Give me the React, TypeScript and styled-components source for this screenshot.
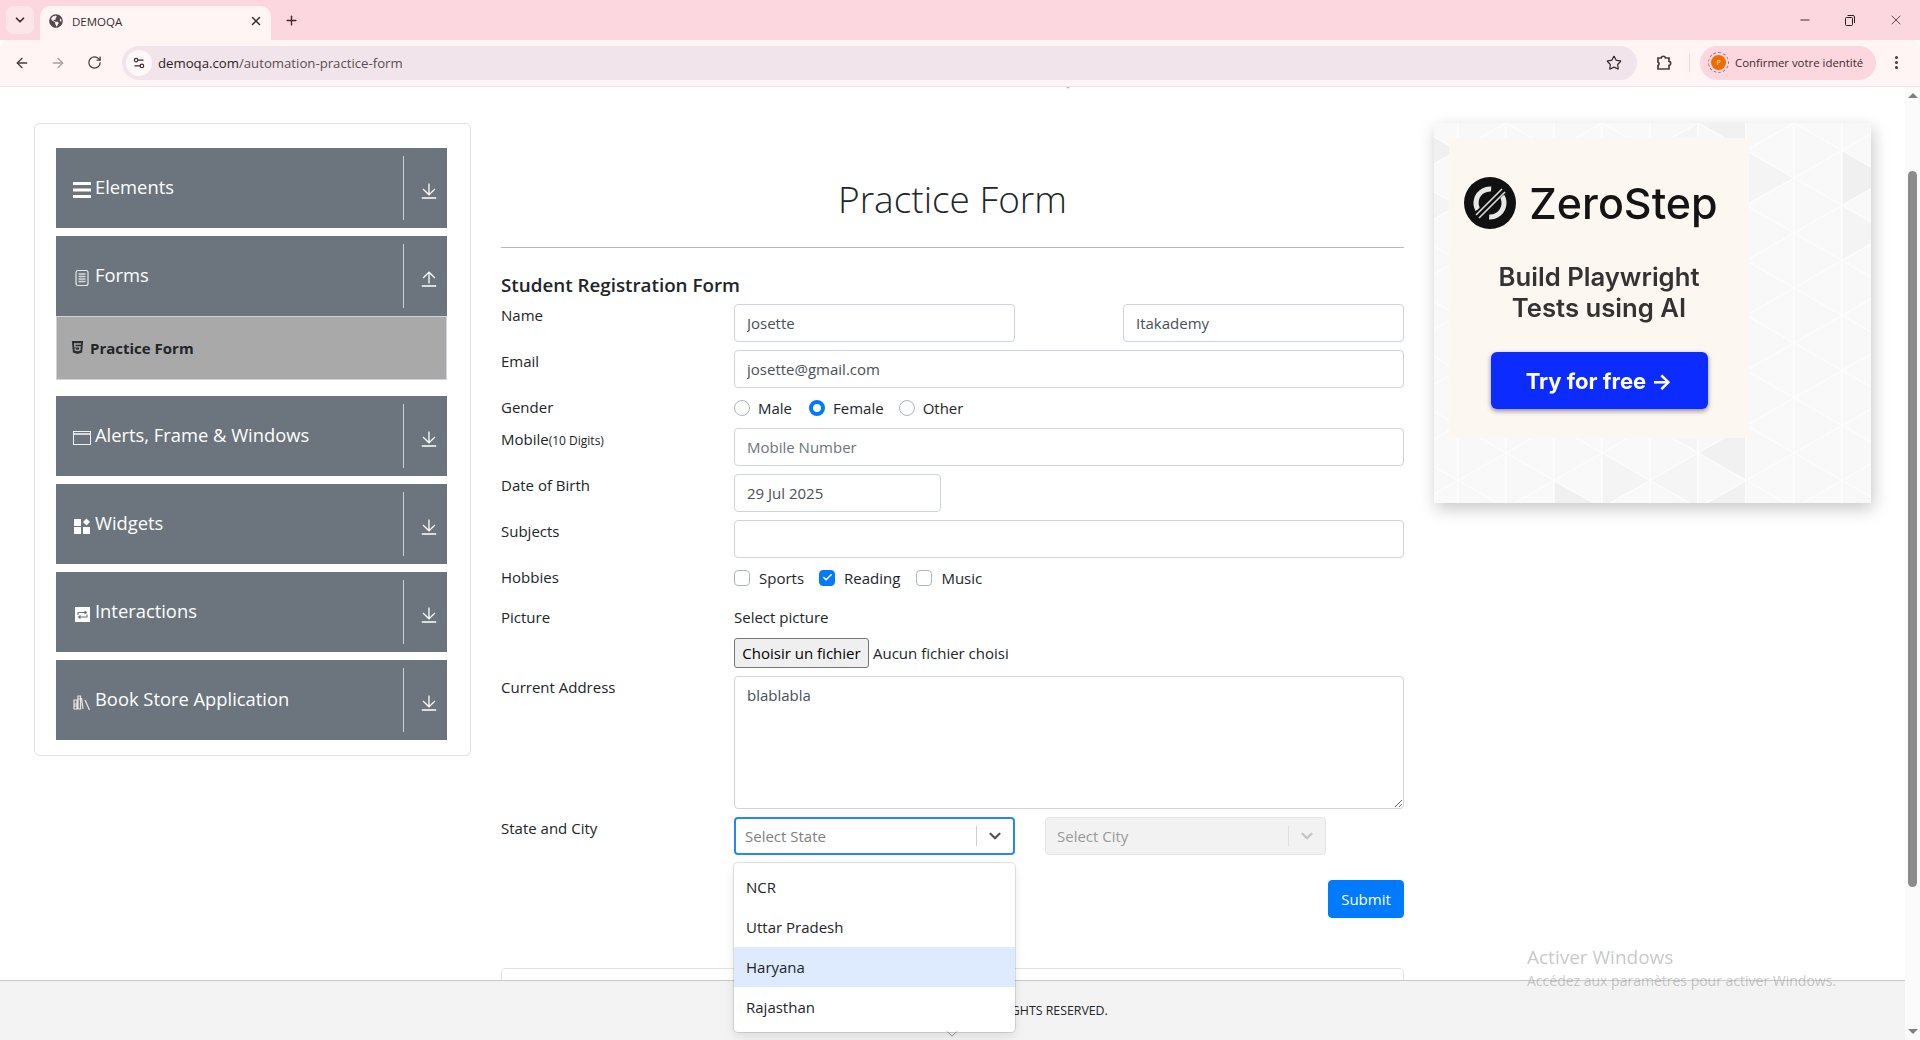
import React, { FunctionComponent } from "react";
import styled, { createGlobalStyle } from "styled-components";
import {
  ArrowLeft,
  ArrowRight,
  Check,
  ChevronDown,
  EllipsisVertical,
  Minus,
  Plus,
  RotateCw,
  Settings2,
  Star,
  X,
} from "lucide-react";
import { FaGlobeAmericas, FaHtml5 } from "react-icons/fa";

const GlobalStyle = createGlobalStyle`
  html, body {
    margin: 0;
    padding: 0;
    width: 1920px;
    height: 1040px;
    overflow: hidden;
    background: #fff;
    font-family: "Open Sans", "Liberation Sans", sans-serif;
    color: #212529;
  }
  * { box-sizing: border-box; }
`;

const Shell = styled.div`
  width: 1920px;
  height: 1040px;
  display: flex;
  flex-direction: column;
`;

/* browser chrome */
const TabStrip = styled.div`
  height: 40px;
  background: #fdd7df;
  display: flex;
  align-items: flex-end;
  padding-left: 6px;
  color: #3b2a2e;
`;
const TabSearch = styled.div`
  width: 28px;
  height: 28px;
  margin-bottom: 6px;
  border-radius: 8px;
  background: #fde6ea;
  display: flex;
  align-items: center;
  justify-content: center;
`;
const Tab = styled.div`
  width: 231px;
  height: 34px;
  margin-left: 6px;
  padding: 0 8px 4px 9px;
  background: #fff5f5;
  border-radius: 10px 10px 0 0;
  display: flex;
  align-items: center;
  font-size: 11.5px;
`;
const TabTitle = styled.span`
  margin-left: 9px;
  flex: 1;
`;
const NewTab = styled.div`
  margin: 0 0 12px 13px;
  display: flex;
`;
const WindowButtons = styled.div`
  margin-left: auto;
  margin-bottom: 12px;
  width: 138px;
  display: flex;
  justify-content: space-around;
  align-items: center;
  padding-right: 0;
`;
const Toolbar = styled.div`
  height: 47px;
  background: #fff5f5;
  border-bottom: 1px solid #f6dfe2;
  border-radius: 8px 8px 0 0;
  padding: 6px 8px 7px 0;
  display: flex;
  align-items: center;
  color: #4b3a3e;
`;
const NavButton = styled.div<{ $faded?: boolean }>`
  width: 36px;
  display: flex;
  justify-content: center;
  color: ${(p) => (p.$faded ? "#ad9fa2" : "#4b3a3e")};
`;
const NavGroup = styled.div`
  margin-left: 4px;
  display: flex;
`;
const Omnibox = styled.div`
  width: 1515px;
  height: 34px;
  margin-left: 10px;
  background: #f1e5eb;
  border-radius: 17px;
  padding: 0 15px 0 3px;
  display: flex;
  align-items: center;
  font-size: 13.2px;
  color: #5c4d52;
`;
const SiteIcon = styled.div`
  width: 26px;
  height: 26px;
  margin: 0 6px 0 1px;
  border-radius: 50%;
  background: #fff8f8;
  display: flex;
  align-items: center;
  justify-content: center;
  color: #3b2a2e;
`;
const Host = styled.span`
  color: #2b1d21;
`;
const OmniSpacer = styled.div`
  flex: 1;
`;
const ExtensionButton = styled.div`
  margin-left: 18px;
  display: flex;
`;
const ToolbarDivider = styled.div`
  width: 1px;
  height: 18px;
  margin: 0 10px 0 17px;
  background: #f8d5dc;
`;
const ProfilePill = styled.div`
  width: 176px;
  height: 34px;
  border-radius: 17px;
  background: #fdd7df;
  padding-left: 9px;
  display: flex;
  align-items: center;
  font-size: 11.4px;
  color: #3b2a2e;
`;
const Avatar = styled.div`
  width: 15px;
  height: 15px;
  margin: 0 9px 0 2px;
  border-radius: 50%;
  background: #ef6c00;
  outline: 1px dashed #9c6f78;
  outline-offset: 2px;
  color: #ffe5c8;
  font-size: 7px;
  display: flex;
  align-items: center;
  justify-content: center;
`;
const MenuButton = styled.div`
  margin-left: 12px;
  display: flex;
`;

/* page */
const Viewport = styled.div`
  flex: 1;
  min-height: 0;
  display: flex;
  position: relative;
`;
const Content = styled.div`
  flex: 1;
  position: relative;
  overflow: hidden;
  padding: 36px 34px 0;
  display: grid;
  grid-template-columns: 437px 903px 437px;
  column-gap: 30px;
  align-items: start;
`;

/* sidebar */
const SideCard = styled.div`
  border: 1px solid #dfdfdf;
  border-radius: 6px;
  padding: 24px 23px 7px 21px;
`;
const Group = styled.div`
  margin-bottom: 8px;
`;
const GroupHeader = styled.div`
  height: 80px;
  background: #6c757d;
  color: #fff;
  padding: 8px 0 8px 17px;
  display: flex;
  align-items: center;
  font-size: 18.35px;
`;
const GroupIcon = styled.div`
  width: 18px;
  height: 18px;
  margin: 4px 4px 0 0;
  display: flex;
`;
const GroupTitle = styled.div`
  flex: 1;
  margin-top: -4px;
`;
const GroupToggle = styled.div`
  width: 44px;
  height: 64px;
  border-left: 1px solid #ced2d6;
  padding: 27px 0 0 17px;
  display: flex;
  align-items: flex-start;
`;
const PracticeItem = styled.div`
  height: 64px;
  margin: 0 0 16px;
  padding-left: 13px;
  background: #a9a9a9;
  border: 1px solid #ced4da;
  display: flex;
  align-items: center;
  font-size: 15px;
  font-weight: 700;
  color: #212529;
`;
const PracticeIcon = styled.div`
  width: 15px;
  margin: -2px 5px 0 0;
  display: flex;
`;

/* form */
const FormColumn = styled.div`
  display: flex;
  flex-direction: column;
`;
const Title = styled.h1`
  margin: 52px 0 0;
  line-height: 48px;
  text-align: center;
  font-size: 37px;
  font-weight: 300;
  color: #212529;
`;
const Rule = styled.hr`
  width: 100%;
  margin: 24px 0 0;
  border: 0;
  border-top: 1px solid #b9b9b9;
`;
const Subtitle = styled.h5`
  margin: 25px 0 7px;
  line-height: 24px;
  font-size: 18.8px;
  font-weight: 600;
  color: #212529;
`;
const Row = styled.div<{ $gap?: number }>`
  display: grid;
  grid-template-columns: 233px 1fr;
  margin-bottom: ${(p) => p.$gap ?? 8}px;
  font-size: 15px;
  color: #212529;
`;
const Label = styled.div`
  height: 24px;
  line-height: 22px;
`;
const Small = styled.small`
  font-size: 12px;
`;
const Field = styled.input<{ $width?: number }>`
  display: block;
  width: ${(p) => (p.$width ? `${p.$width}px` : "100%")};
  height: 38px;
  padding: 6px 12px;
  border: 1px solid #ced4da;
  border-radius: 4px;
  background: #fff;
  font: inherit;
  color: #495057;
  outline: none;
  &::placeholder {
    color: #6c757d;
    opacity: 1;
  }
`;
const NameFields = styled.div`
  display: flex;
  justify-content: space-between;
`;
const Choices = styled.div`
  display: flex;
  align-items: center;
  height: 24px;
  padding-bottom: 1px;
`;
const Choice = styled.div<{ $gap: number }>`
  display: flex;
  align-items: center;
  margin-right: ${(p) => p.$gap}px;
`;
const Radio = styled.span<{ $on?: boolean }>`
  width: 16px;
  height: 16px;
  margin-right: 8px;
  border-radius: 50%;
  background: #fff;
  border: ${(p) => (p.$on ? "4.5px solid #007bff" : "1px solid #adb5bd")};
`;
const CheckBox = styled.span<{ $on?: boolean }>`
  width: 16px;
  height: 16px;
  margin-right: 9px;
  border-radius: 4px;
  background: ${(p) => (p.$on ? "#007bff" : "#fff")};
  border: 1px solid ${(p) => (p.$on ? "#007bff" : "#adb5bd")};
  color: #fff;
  display: flex;
  align-items: center;
  justify-content: center;
`;
const PickerLabel = styled.div`
  height: 24px;
  line-height: 22px;
  margin-bottom: 8px;
`;
const FileLine = styled.div`
  display: flex;
  align-items: center;
  height: 30px;
`;
const FileButton = styled.button`
  width: 135px;
  height: 30px;
  padding: 0;
  margin-right: 4px;
  background: #efefef;
  border: 1px solid #767676;
  border-radius: 3px;
  font: inherit;
  color: #000;
`;
const AddressBox = styled.textarea`
  display: block;
  width: 100%;
  height: 133px;
  padding: 6px 12px;
  border: 1px solid #ced4da;
  border-radius: 4px;
  font: inherit;
  line-height: 24px;
  color: #495057;
  outline: none;
`;
const SelectRow = styled.div`
  display: flex;
  gap: 30px;
`;
const Select = styled.div<{ $focused?: boolean; $disabled?: boolean }>`
  width: 281px;
  height: 38px;
  padding-left: ${(p) => (p.$focused ? "9px" : "11px")};
  border-radius: 4px;
  border: ${(p) =>
    p.$focused
      ? "2px solid #2684ff"
      : p.$disabled
      ? "1px solid #e6e6e6"
      : "1px solid #ccc"};
  background: ${(p) => (p.$disabled ? "#f2f2f2" : "#fff")};
  color: ${(p) => (p.$disabled ? "#999" : "#808080")};
  display: flex;
  align-items: center;
`;
const SelectText = styled.div`
  flex: 1;
`;
const SelectDivider = styled.span<{ $disabled?: boolean }>`
  width: 1px;
  height: 20px;
  background: ${(p) => (p.$disabled ? "#e0e0e0" : "#ccc")};
`;
const SelectChevron = styled.div<{ $disabled?: boolean }>`
  width: 36px;
  display: flex;
  justify-content: center;
  color: ${(p) => (p.$disabled ? "#c4c4c4" : "#555")};
`;
const Menu = styled.div`
  position: absolute;
  left: 734px;
  top: 776px;
  z-index: 5;
  width: 281px;
  height: 169px;
  padding: 4px 0;
  background: #fff;
  border-radius: 4px;
  box-shadow: 0 0 0 1px rgba(0, 0, 0, 0.1), 0 4px 11px rgba(0, 0, 0, 0.1);
  font-size: 15px;
  color: #212529;
`;
const MenuOption = styled.div<{ $active?: boolean }>`
  height: 40px;
  padding-left: 12px;
  display: flex;
  align-items: center;
  background: ${(p) => (p.$active ? "#deebff" : "transparent")};
`;
const SubmitLine = styled.div`
  display: flex;
  justify-content: flex-end;
  margin-top: 25px;
`;
const SubmitButton = styled.button`
  width: 76px;
  height: 38px;
  background: #007bff;
  border: 1px solid #007bff;
  border-radius: 4px;
  color: #fff;
  font: inherit;
  font-size: 15px;
`;
const NextCard = styled.div`
  height: 60px;
  margin-top: 50px;
  border: 1px solid #e3e3e3;
  border-radius: 4px 4px 0 0;
`;

/* ad */
const Ad = styled.div`
  position: relative;
  height: 380px;
  padding: 15px;
  overflow: visible;
  box-shadow: 2px 6px 16px rgba(0, 0, 0, 0.22);
  background: #f8f8f8;
`;
const AdPattern = styled.svg`
  position: absolute;
  inset: 0;
  width: 437px;
  height: 380px;
`;
const AdPanel = styled.div`
  position: relative;
  width: 300px;
  height: 300px;
  padding-top: 38px;
  background: #fcf7f1;
  display: flex;
  flex-direction: column;
  align-items: center;
  font-family: Inter, "Open Sans", sans-serif;
  filter: blur(0.5px);
`;
const AdBrand = styled.div`
  display: flex;
  align-items: center;
  gap: 13px;
  margin-left: -16px;
  font-size: 43px;
  font-weight: 500;
  line-height: 54px;
  color: #141414;
`;
const AdCopy = styled.div`
  margin-top: 31px;
  font-size: 25.7px;
  font-weight: 600;
  line-height: 31px;
  text-align: center;
  color: #333;
`;
const AdButton = styled.div`
  width: 217px;
  height: 57px;
  margin-top: 29px;
  border-radius: 6px;
  background: #0b2bff;
  box-shadow: 0 2px 5px rgba(0, 0, 60, 0.45);
  color: #fff;
  font-size: 22px;
  font-weight: 700;
  display: flex;
  align-items: center;
  justify-content: center;
`;

/* overlays */
const Footer = styled.div`
  position: absolute;
  left: 0;
  right: 0;
  bottom: 0;
  height: 60px;
  padding-top: 21px;
  z-index: 3;
  background: #f3f3f3;
  border-top: 1px solid #c9c9c9;
  text-align: center;
  font-size: 12.35px;
  line-height: 18px;
  color: #212529;
`;
const Watermark = styled.div`
  position: absolute;
  left: 1527px;
  top: 856px;
  z-index: 4;
  color: rgba(120, 120, 120, 0.42);
  pointer-events: none;
`;
const WatermarkTitle = styled.div`
  font-size: 19px;
  line-height: 28px;
`;
const WatermarkText = styled.div`
  font-size: 14px;
  line-height: 20px;
`;
const ScrollCue = styled.div<{ $top: number; $left: number }>`
  position: absolute;
  left: ${(p) => p.$left}px;
  top: ${(p) => p.$top}px;
  z-index: 6;
  display: flex;
  color: #8a8a8a;
`;
const Scrollbar = styled.div`
  width: 15px;
  position: relative;
  z-index: 4;
  background: #fbfbfb;
  display: flex;
  flex-direction: column;
  align-items: center;
`;
const ScrollArrow = styled.span<{ $down?: boolean }>`
  margin-top: ${(p) => (p.$down ? "auto" : "6px")};
  margin-bottom: ${(p) => (p.$down ? "6px" : "0")};
  border-left: 5px solid transparent;
  border-right: 5px solid transparent;
  ${(p) =>
    p.$down ? "border-top: 5px solid #808080;" : "border-bottom: 5px solid #808080;"}
`;
const ScrollThumb = styled.div`
  width: 9px;
  height: 716px;
  margin-top: 73px;
  border-radius: 5px;
  background: #8b8b8b;
`;

const DownloadIcon = () => (
  <svg width="16" height="16" viewBox="0 0 16 16" fill="none" stroke="#fff" strokeWidth="1.3">
    <path d="M8 0.500v11M2 6 8 11.800 14 6M0.800 15h14.400" />
  </svg>
);
const UploadIcon = () => (
  <svg width="16" height="16" viewBox="0 0 16 16" fill="none" stroke="#fff" strokeWidth="1.3">
    <path d="M8 12.500V1.500M2 7 8 1.200 14 7M0.800 15h14.400" />
  </svg>
);
const BarsIcon = () => (
  <svg width="18" height="18" viewBox="0 0 18 18" fill="#fff">
    <rect x="0" y="1" width="18" height="3" />
    <rect x="0" y="7.500" width="18" height="3" />
    <rect x="0" y="14" width="18" height="3" />
  </svg>
);
const FormsIcon = () => (
  <svg width="18" height="18" viewBox="0 0 18 18">
    <rect x="3" y="1.500" width="12" height="15" rx="2" fill="none" stroke="#e8e8e8" strokeWidth="1.200" />
    <path d="M5.500 5h7M5.500 7.500h7M5.500 10h7M5.500 12.500h7" stroke="#d8d8d8" strokeWidth="1.400" />
  </svg>
);
const WindowIcon = () => (
  <svg width="18" height="18" viewBox="0 0 18 18" fill="none" stroke="#f2f2f2">
    <rect x="0.500" y="2.500" width="17" height="13" />
    <path d="M0.500 5h17" strokeWidth="1.600" />
  </svg>
);
const WidgetsIcon = () => (
  <svg width="18" height="18" viewBox="0 0 18 18" fill="#fff">
    <rect x="1" y="2" width="7" height="7" />
    <rect x="1" y="10" width="7" height="7" />
    <rect x="10" y="10" width="7" height="7" />
    <path d="M13.500 1.500 17 5l-3.500 3.500L10 5z" />
  </svg>
);
const InteractionsIcon = () => (
  <svg width="18" height="18" viewBox="0 0 18 18">
    <rect x="2" y="2" width="15" height="15" fill="#fff" />
    <path d="M5 10V7.500h8M11.500 6l2 1.500-2 1.500M14 9.500V12H6M7.500 10.500l-2 1.500 2 1.500" fill="none" stroke="#6c757d" strokeWidth="1.100" />
  </svg>
);
const BooksIcon = () => (
  <svg width="18" height="18" viewBox="0 0 18 18" fill="none" stroke="#e6e6e6" strokeWidth="1.200">
    <path d="M1 7h3v9H1zM5 3h2.500v13H5zM8.500 5 10 16M12 7l4.500 10" />
    <path d="M1 11h3M1 13h3M5 6h2.500" />
  </svg>
);
const RestoreIcon = () => (
  <svg width="12" height="12" viewBox="0 0 12 12" fill="none" stroke="#2b1d21">
    <rect x="1.500" y="3.500" width="7" height="8" rx="1" />
    <path d="M3.500 1.500h5.500a1.500 1.500 0 0 1 1.500 1.500v6" />
  </svg>
);
const ExtensionIcon = () => (
  <svg width="17" height="17" viewBox="0 0 17 17" fill="none" stroke="#4b3a3e" strokeWidth="1.700">
    <path d="M3 4h3.200a2.200 2.200 0 0 1 4.300 0H14v3.200a2.200 2.200 0 0 1 0 4.300V15H3v-3.500a2 2 0 0 0 0-3.500z" />
  </svg>
);
const ZeroStepLogo = () => (
  <svg width="52" height="52" viewBox="0 0 52 52">
    <circle cx="26" cy="26" r="26" fill="#111" />
    <circle cx="26" cy="26" r="14" fill="none" stroke="#e8e8e8" strokeWidth="5" strokeDasharray="30 14" transform="rotate(-30 26 26)" />
    <path d="M10 42 42 10" stroke="#111" strokeWidth="8" />
    <path d="M12 38 38 12M15 41 41 15" stroke="#ddd" strokeWidth="1.600" />
  </svg>
);

const AdBackground: FunctionComponent = () => {
  const colW = 48;
  const edge = 55;
  const triangles: { points: string; fill: string }[] = [];
  for (let c = 0; c < 11; c++) {
    const shift = c % 2 === 0 ? 0 : edge / 2;
    for (let r = -1; r < 9; r++) {
      const x = c * colW - 24;
      const y = r * edge + shift;
      const seed = (c * 7 + r * 13 + c * r) % 9;
      const seedB = (c * 5 + r * 11 + 3) % 11;
      triangles.push({
        points: `${x},${y} ${x},${y + edge} ${x + colW},${y + edge / 2}`,
        fill: seed === 0 ? "#f0f0f0" : seed === 4 ? "#f4f4f4" : "#f8f8f8",
      });
      triangles.push({
        points: `${x + colW},${y + edge / 2} ${x + colW},${y + edge * 1.5} ${x},${y + edge}`,
        fill: seedB === 0 ? "#f1f1f1" : seedB === 6 ? "#f5f5f5" : "#f9f9f9",
      });
    }
  }
  return (
    <AdPattern viewBox="0 0 437 380">
      {triangles.map((t, i) => (
        <polygon key={i} points={t.points} fill={t.fill} stroke="#fdfdfd" strokeWidth="1.200" />
      ))}
    </AdPattern>
  );
};

const groups = {
  elements: { title: "Elements", icon: <BarsIcon /> },
  alerts: { title: "Alerts, Frame & Windows", icon: <WindowIcon /> },
  widgets: { title: "Widgets", icon: <WidgetsIcon /> },
  interactions: { title: "Interactions", icon: <InteractionsIcon /> },
  books: { title: "Book Store Application", icon: <BooksIcon /> },
};

const SideGroup: FunctionComponent<{
  title: string;
  icon: React.ReactNode;
  open?: boolean;
}> = ({ title, icon, open }) => (
  <GroupHeader>
    <GroupIcon>{icon}</GroupIcon>
    <GroupTitle>{title}</GroupTitle>
    <GroupToggle>{open ? <UploadIcon /> : <DownloadIcon />}</GroupToggle>
  </GroupHeader>
);

const Sidebar: FunctionComponent = () => (
  <SideCard>
    <Group>
      <SideGroup {...groups.elements} />
    </Group>
    <SideGroup title="Forms" icon={<FormsIcon />} open />
    <PracticeItem>
      <PracticeIcon>
        <FaHtml5 size={15} color="#2b2f33" />
      </PracticeIcon>
      Practice Form
    </PracticeItem>
    <Group>
      <SideGroup {...groups.alerts} />
    </Group>
    <Group>
      <SideGroup {...groups.widgets} />
    </Group>
    <Group>
      <SideGroup {...groups.interactions} />
    </Group>
    <Group>
      <SideGroup {...groups.books} />
    </Group>
  </SideCard>
);

const RegistrationForm: FunctionComponent = () => (
  <FormColumn>
    <Title>Practice Form</Title>
    <Rule />
    <Subtitle>Student Registration Form</Subtitle>
    <Row>
      <Label>Name</Label>
      <NameFields>
        <Field $width={281} defaultValue="Josette" />
        <Field $width={281} defaultValue="Itakademy" />
      </NameFields>
    </Row>
    <Row>
      <Label>Email</Label>
      <Field defaultValue="josette@gmail.com" />
    </Row>
    <Row>
      <Label>Gender</Label>
      <Choices>
        <Choice $gap={17}>
          <Radio />
          Male
        </Choice>
        <Choice $gap={15}>
          <Radio $on />
          Female
        </Choice>
        <Choice $gap={0}>
          <Radio />
          Other
        </Choice>
      </Choices>
    </Row>
    <Row>
      <Label>
        Mobile<Small>(10 Digits)</Small>
      </Label>
      <Field placeholder="Mobile Number" />
    </Row>
    <Row>
      <Label>Date of Birth</Label>
      <Field $width={207} defaultValue="29 Jul 2025" />
    </Row>
    <Row>
      <Label>Subjects</Label>
      <Field />
    </Row>
    <Row $gap={16}>
      <Label>Hobbies</Label>
      <Choices>
        <Choice $gap={15}>
          <CheckBox />
          Sports
        </Choice>
        <Choice $gap={16}>
          <CheckBox $on>
            <Check size={11} strokeWidth={3.5} />
          </CheckBox>
          Reading
        </Choice>
        <Choice $gap={0}>
          <CheckBox />
          Music
        </Choice>
      </Choices>
    </Row>
    <Row>
      <Label>Picture</Label>
      <div>
        <PickerLabel>Select picture</PickerLabel>
        <FileLine>
          <FileButton type="button">Choisir un fichier</FileButton>
          Aucun fichier choisi
        </FileLine>
      </div>
    </Row>
    <Row>
      <Label>Current Address</Label>
      <AddressBox defaultValue="blablabla" />
    </Row>
    <Row $gap={0}>
      <Label>State and City</Label>
      <SelectRow>
        <Select $focused>
          <SelectText>Select State</SelectText>
          <SelectDivider />
          <SelectChevron>
            <ChevronDown size={18} strokeWidth={3} />
          </SelectChevron>
        </Select>
        <Select $disabled>
          <SelectText>Select City</SelectText>
          <SelectDivider $disabled />
          <SelectChevron $disabled>
            <ChevronDown size={18} strokeWidth={3} />
          </SelectChevron>
        </Select>
      </SelectRow>
    </Row>
    <SubmitLine>
      <SubmitButton type="button">Submit</SubmitButton>
    </SubmitLine>
    <NextCard />
  </FormColumn>
);

const Advert: FunctionComponent = () => (
  <Ad>
    <AdBackground />
    <AdPanel>
      <AdBrand>
        <ZeroStepLogo />
        ZeroStep
      </AdBrand>
      <AdCopy>
        Build Playwright
        <br />
        Tests using AI
      </AdCopy>
      <AdButton>Try for free →</AdButton>
    </AdPanel>
  </Ad>
);

const BrowserChrome: FunctionComponent = () => (
  <>
    <TabStrip>
      <TabSearch>
        <ChevronDown size={14} strokeWidth={3} />
      </TabSearch>
      <Tab>
        <FaGlobeAmericas size={14} color="#55474b" />
        <TabTitle>DEMOQA</TabTitle>
        <X size={14} strokeWidth={2.6} />
      </Tab>
      <NewTab>
        <Plus size={15} strokeWidth={2.2} />
      </NewTab>
      <WindowButtons>
        <Minus size={14} strokeWidth={1.8} />
        <RestoreIcon />
        <X size={16} strokeWidth={1.2} />
      </WindowButtons>
    </TabStrip>
    <Toolbar>
      <NavGroup>
        <NavButton>
          <ArrowLeft size={16} />
        </NavButton>
        <NavButton $faded>
          <ArrowRight size={16} />
        </NavButton>
        <NavButton>
          <RotateCw size={15} />
        </NavButton>
      </NavGroup>
      <Omnibox>
        <SiteIcon>
          <Settings2 size={14} />
        </SiteIcon>
        <Host>demoqa.com</Host>/automation-practice-form
        <OmniSpacer />
        <Star size={16} color="#3b2a2e" strokeWidth={1.8} />
      </Omnibox>
      <ExtensionButton>
        <ExtensionIcon />
      </ExtensionButton>
      <ToolbarDivider />
      <ProfilePill>
        <Avatar>P</Avatar>
        Confirmer votre identité
      </ProfilePill>
      <MenuButton>
        <EllipsisVertical size={17} strokeWidth={2.4} />
      </MenuButton>
    </Toolbar>
  </>
);

export default function App() {
  return (
    <Shell>
      <GlobalStyle />
      <BrowserChrome />
      <Viewport>
        <Content>
          <Sidebar />
          <RegistrationForm />
          <Advert />
          <ScrollCue $top={-5} $left={1063}>
            <ChevronDown size={10} />
          </ScrollCue>
          <Menu>
            <MenuOption>NCR</MenuOption>
            <MenuOption>Uttar Pradesh</MenuOption>
            <MenuOption $active>Haryana</MenuOption>
            <MenuOption>Rajasthan</MenuOption>
          </Menu>
          <ScrollCue $top={938} $left={943}>
            <ChevronDown size={18} strokeWidth={1.3} />
          </ScrollCue>
          <Footer>© 2013-2020 TOOLSQA.COM | ALL RIGHTS RESERVED.</Footer>
          <Watermark>
            <WatermarkTitle>Activer Windows</WatermarkTitle>
            <WatermarkText>Accédez aux paramètres pour activer Windows.</WatermarkText>
          </Watermark>
        </Content>
        <Scrollbar>
          <ScrollArrow />
          <ScrollThumb />
          <ScrollArrow $down />
        </Scrollbar>
      </Viewport>
    </Shell>
  );
}
